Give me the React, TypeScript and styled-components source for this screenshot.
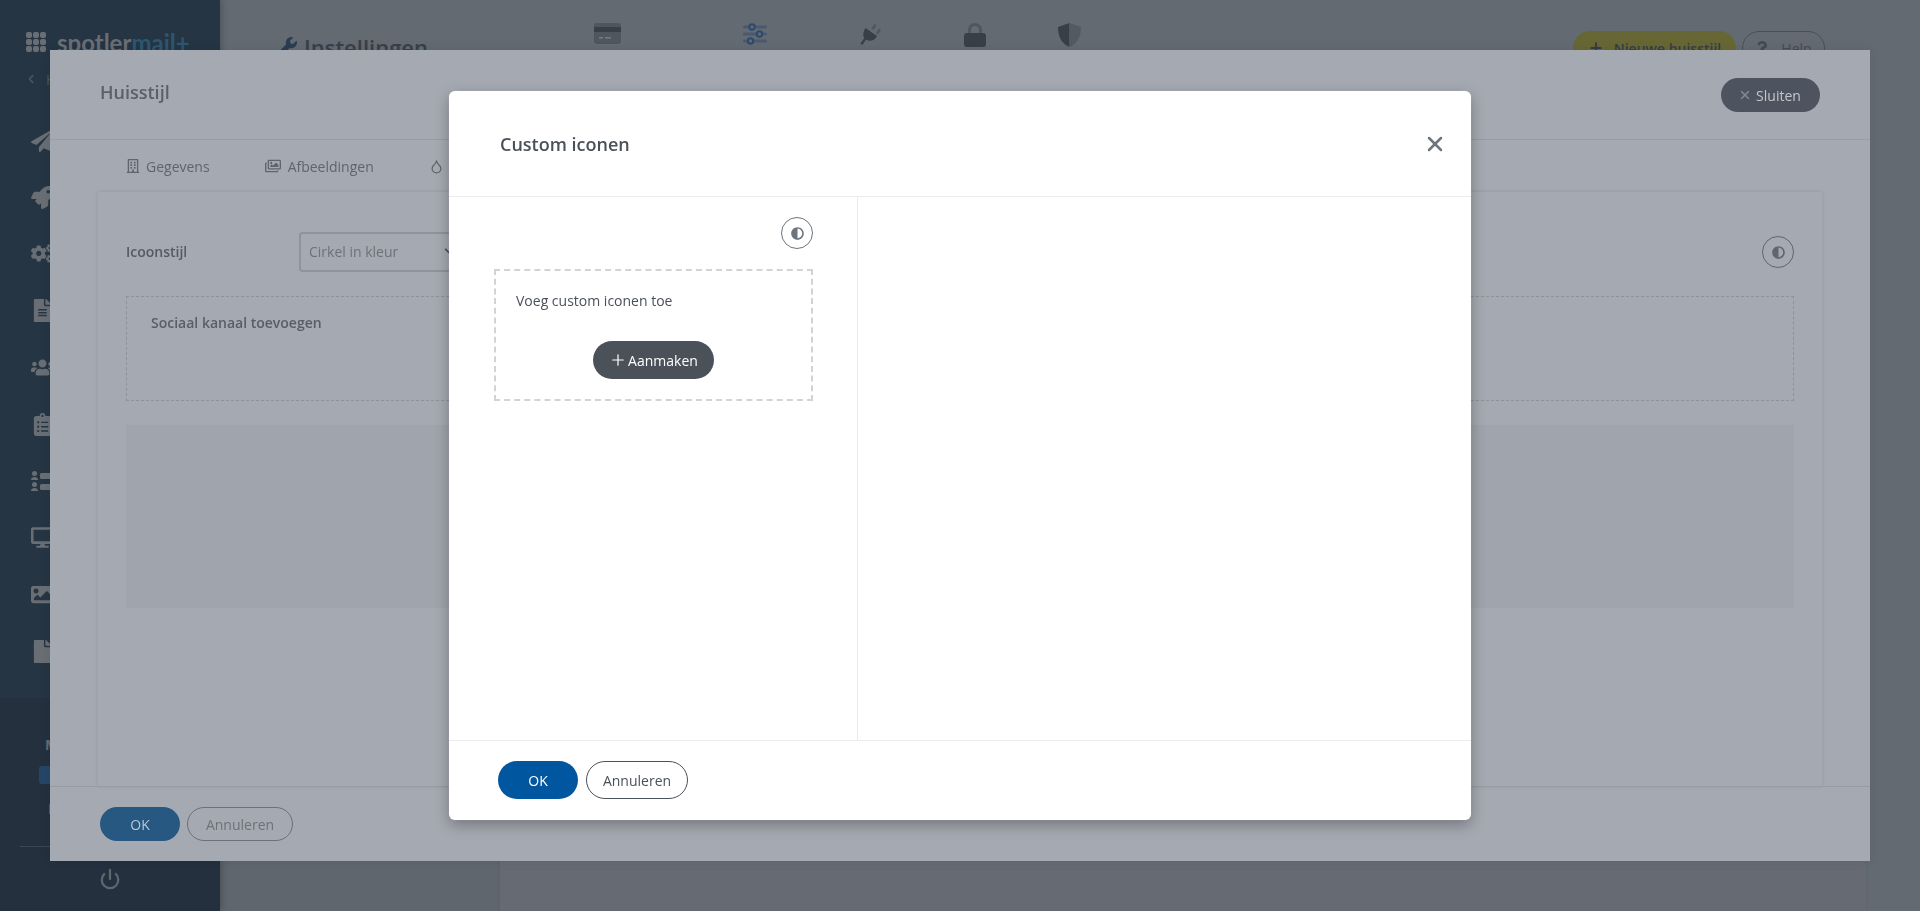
import React from 'react';
import styled, { createGlobalStyle } from 'styled-components';
import {
  FaPaperPlane, FaRocket, FaCogs, FaFileAlt, FaUsers, FaClipboardList, FaDesktop, FaImage, FaFile,
  FaWrench, FaRegBuilding, FaRegImages, FaAdjust, FaChevronLeft, FaChevronDown, FaQuestion,
} from 'react-icons/fa';
import { Plus, X, Power, Droplet } from 'lucide-react';

const Global = createGlobalStyle`
  html, body { margin: 0; padding: 0; height: 100%; overflow: hidden; }
  body { font-family: "Open Sans", "Noto Sans", sans-serif; font-size: 14px; }
  * { box-sizing: border-box; }
`;

const Page = styled.div`
  display: grid;
  grid-template-columns: 220px 1fr;
  height: 911px;
  background: #636a72;
`;

/* ---------- sidebar (behind the dialogs) ---------- */
const Sidebar = styled.aside`
  display: flex;
  flex-direction: column;
  background: #24303e;
  box-shadow: 2px 0 6px rgba(0, 0, 0, 0.2);
  position: relative;
  color: #6f747b;
`;
const SidebarTop = styled.div`
  height: 698px;
  background: #253543;
  padding: 32px 0 0 26px;
`;
const Logo = styled.div`
  display: flex;
  align-items: center;
  gap: 11px;
  height: 20px;
`;
const Waffle = styled.div`
  display: grid;
  grid-template-columns: repeat(3, 6px);
  grid-auto-rows: 6px;
  gap: 1px;
  span { background: #696e75; border-radius: 2px; }
`;
const LogoText = styled.div`
  margin-top: 2px;
  font-family: Lato, sans-serif;
  font-weight: 700;
  font-size: 24px;
  line-height: 28px;
  color: #696e75;
  span { color: #2c5671; }
`;
const BackLink = styled.div`
  display: flex;
  align-items: center;
  gap: 10px;
  margin-top: 17px;
  height: 20px;
  color: #4b5560;
  font-size: 14px;
`;
const Nav = styled.nav`
  margin-top: 23px;
  display: flex;
  flex-direction: column;
  margin-left: 5px;
`;
const NavItem = styled.div`
  height: 56.8px;
  display: flex;
  align-items: center;
  color: #696e75;
  font-size: 23px;
`;
const SidebarBottom = styled.div`
  flex: 1;
  display: flex;
  flex-direction: column;
  padding-top: 37px;
`;
const AccountLine = styled.div<{ $indent: number; $top: number }>`
  margin-left: ${(p) => p.$indent}px;
  margin-top: ${(p) => p.$top}px;
  font-weight: 700;
  font-size: 14px;
  line-height: 20px;
  color: #666b72;
`;
const AccountBadge = styled.div`
  margin: 11px 0 0 39px;
  width: 40px;
  height: 18px;
  background: #264668;
  border-radius: 3px;
`;
const SideDivider = styled.div`
  height: 1px;
  margin: 27px 20px 0;
  background: #3c4754;
`;
const PowerWrap = styled.div`
  display: flex;
  justify-content: center;
  margin-top: 21px;
  color: #5f656d;
`;

/* ---------- main page (behind the dialogs) ---------- */
const Main = styled.main`
  display: flex;
  flex-direction: column;
  min-width: 0;
`;
const TopBar = styled.header`
  display: flex;
  align-items: flex-start;
  height: 100px;
  padding: 23px 95px 0 57px;
`;
const TitleGroup = styled.div`
  width: 317px;
  margin-top: 10px;
  display: flex;
  align-items: center;
  gap: 7px;
  color: #2b3d50;
  font-size: 20px;
`;
const PageTitle = styled.h1`
  margin: 0;
  font-size: 22px;
  line-height: 28px;
  font-weight: 600;
  color: #383f49;
`;
const TopTab = styled.div<{ $gap: number }>`
  margin-left: ${(p) => p.$gap}px;
  line-height: 0;
`;
const TopActions = styled.div`
  margin-left: auto;
  margin-top: 8px;
  display: flex;
  gap: 6px;
`;
const TopButton = styled.div<{ $yellow?: boolean }>`
  height: 34px;
  border-radius: 17px;
  display: flex;
  justify-content: center;
  align-items: center;
  gap: ${(p) => (p.$yellow ? 10 : 12)}px;
  width: ${(p) => (p.$yellow ? 163 : 83)}px;
  background: ${(p) => (p.$yellow ? '#676735' : 'transparent')};
  border: ${(p) => (p.$yellow ? '0' : '1px solid #475059')};
  color: ${(p) => (p.$yellow ? '#363d42' : '#434c54')};
  font-size: 14px;
  font-weight: ${(p) => (p.$yellow ? 600 : 400)};
`;
const PageBody = styled.div`
  flex: 1;
  display: grid;
  grid-template-columns: 280px 1fr;
  margin-right: 54px;
`;
const PageLeft = styled.div`
  background: #60666e;
`;
const PageRight = styled.div`
  background: #666a72;
  box-shadow: 0 0 3px rgba(0, 0, 0, 0.08);
`;

/* ---------- full-screen style editor ---------- */
const StylePanel = styled.section`
  position: fixed;
  left: 50px;
  top: 50px;
  width: 1820px;
  height: 811px;
  display: flex;
  flex-direction: column;
  background: #a5a9b1;
  box-shadow: 0 0 10px rgba(0, 0, 0, 0.08);
  color: #5f656d;
`;
const PanelHeader = styled.div`
  height: 90px;
  flex-shrink: 0;
  display: flex;
  align-items: center;
  justify-content: space-between;
  padding: 0 50px 0 50px;
  border-bottom: 1px solid #989ca5;
`;
const PanelTitle = styled.h2`
  margin: -6px 0 0;
  font-size: 18px;
  line-height: 24px;
  font-weight: 600;
  color: #5a6068;
`;
const CloseButton = styled.div`
  height: 34px;
  width: 99px;
  padding-right: 2px;
  border-radius: 17px;
  background: #4d545f;
  color: #c3c6cb;
  font-size: 14px;
  font-weight: 500;
  display: flex;
  align-items: center;
  justify-content: center;
  gap: 4px;
  margin-top: 1px;
  svg { color: #858a93; }
`;
const Tabs = styled.nav`
  height: 52px;
  flex-shrink: 0;
  display: flex;
  align-items: center;
  gap: 55px;
  padding-left: 76px;
`;
const Tab = styled.div<{ $gap: number }>`
  display: flex;
  align-items: center;
  gap: ${(p) => p.$gap}px;
  font-size: 14px;
  color: #5f656d;
`;
const Card = styled.div`
  flex: 1;
  margin: 0 48px;
  padding: 40px 28px 0;
  box-shadow: 0 0 4px rgba(0, 0, 0, 0.12);
  min-height: 0;
`;
const StyleRow = styled.div`
  display: flex;
  align-items: center;
  height: 40px;
`;
const RowLabel = styled.div`
  width: 173px;
  margin-top: -2px;
  font-weight: 600;
  font-size: 14px;
  color: #555b63;
`;
const FakeSelect = styled.div`
  width: 167px;
  height: 40px;
  padding: 0 10px 2px 8px;
  border: 2px solid #8f939c;
  border-radius: 4px;
  display: flex;
  align-items: center;
  justify-content: space-between;
  font-size: 14px;
  color: #6d7279;
  svg { color: #4b5159; }
`;
const ToggleCircle = styled.div<{ $dim?: boolean }>`
  width: 32px;
  height: 32px;
  flex-shrink: 0;
  margin-left: auto;
  border-radius: 50%;
  border: 1px solid ${(p) => (p.$dim ? '#5f666f' : '#6c757d')};
  color: ${(p) => (p.$dim ? '#5f666f' : '#6c757d')};
  display: flex;
  align-items: center;
  justify-content: center;
`;
const AddChannel = styled.div`
  margin-top: 24px;
  height: 105px;
  padding: 15px 24px;
  border: 1px dashed #8d9199;
  font-size: 14px;
  line-height: 21px;
  font-weight: 600;
  color: #585e66;
`;
const PreviewBlock = styled.div`
  margin-top: 24px;
  height: 183px;
  background: #a0a4ac;
`;
const PanelFooter = styled.div`
  height: 75px;
  flex-shrink: 0;
  display: flex;
  gap: 7px;
  padding: 20px 0 0 50px;
  border-top: 1px solid #979ba4;
`;
const PanelOk = styled.div`
  width: 80px;
  height: 34px;
  border-radius: 17px;
  background: #265882;
  color: #b9c6d3;
  font-weight: 500;
  font-size: 14px;
  display: flex;
  align-items: center;
  justify-content: center;
`;
const PanelCancel = styled.div`
  width: 106px;
  height: 34px;
  border-radius: 17px;
  border: 1px solid #6b7079;
  color: #6d7279;
  font-size: 14px;
  display: flex;
  align-items: center;
  justify-content: center;
`;

/* ---------- dialog ---------- */
const Dialog = styled.section`
  position: fixed;
  left: 449px;
  top: 91px;
  width: 1022px;
  height: 729px;
  display: flex;
  flex-direction: column;
  background: #fff;
  border-radius: 6px;
  box-shadow: 0 5px 15px rgba(0, 0, 0, 0.3), 0 0 1px rgba(255, 255, 255, 0.6);
  color: #4b5159;
`;
const DialogHeader = styled.div`
  height: 106px;
  flex-shrink: 0;
  display: flex;
  align-items: center;
  justify-content: space-between;
  padding: 0 24px 0 51px;
  border-bottom: 1px solid #e9ebec;
`;
const DialogTitle = styled.h3`
  margin: 0;
  font-size: 18px;
  line-height: 24px;
  font-weight: 600;
  color: #4b5159;
`;
const CloseIcon = styled.div`
  color: #6c757d;
  line-height: 0;
`;
const DialogBody = styled.div`
  flex: 1;
  min-height: 0;
  display: grid;
  grid-template-columns: 409px 1fr;
`;
const LeftColumn = styled.div`
  border-right: 1px solid #e9ebec;
  padding: 20px 44px 0 45px;
`;
const ToggleRow = styled.div`
  display: flex;
  height: 32px;
`;
const DropZone = styled.div`
  margin-top: 20px;
  height: 132px;
  padding: 19px 20px 20px;
  border: 2px dashed #d2d3d5;
  display: flex;
  flex-direction: column;
  align-items: center;
`;
const DropText = styled.div`
  align-self: flex-start;
  font-size: 14px;
  line-height: 21px;
  color: #4b5159;
`;
const CreateButton = styled.button`
  margin-top: 30px;
  width: 121px;
  height: 38px;
  border: 0;
  border-radius: 19px;
  background: #4b5159;
  color: #fff;
  font: 500 14px "Open Sans", sans-serif;
  display: flex;
  align-items: center;
  justify-content: center;
  gap: 1px;
  padding: 0;
`;
const DialogFooter = styled.div`
  height: 80px;
  flex-shrink: 0;
  display: flex;
  gap: 8px;
  padding: 20px 0 0 49px;
  border-top: 1px solid #e9ebec;
`;
const OkButton = styled.button`
  width: 80px;
  height: 38px;
  border: 0;
  padding: 0;
  border-radius: 19px;
  background: #01579f;
  color: #fff;
  font: 500 14px "Open Sans", sans-serif;
`;
const CancelButton = styled.button`
  width: 102px;
  height: 38px;
  padding: 0;
  border: 1px solid #4b5159;
  border-radius: 19px;
  background: #fff;
  color: #4b5159;
  font: 400 14px "Open Sans", sans-serif;
`;

/* ---------- drawings ---------- */
const CardIcon = () => (
  <svg width="27" height="21" viewBox="0 0 27 21">
    <rect width="27" height="21" rx="3" fill="#4f565f" />
    <rect y="4" width="27" height="5" fill="#383f48" />
    <rect x="5" y="14" width="4" height="1.6" fill="#747a82" />
    <rect x="11" y="14" width="6" height="1.6" fill="#747a82" />
  </svg>
);
const SlidersIcon = () => (
  <svg width="24" height="22" viewBox="0 0 24 22" fill="none">
    <g fill="#4a5a6c">
      <rect y="2.5" width="24" height="3" rx="1.5" />
      <rect y="9.5" width="24" height="3" rx="1.5" />
      <rect y="16.5" width="24" height="3" rx="1.5" />
    </g>
    <g fill="#636a72" stroke="#2a4a6e" strokeWidth="2">
      <circle cx="9" cy="4" r="2.7" />
      <circle cx="16.5" cy="11" r="2.7" />
      <circle cx="7.5" cy="18" r="2.7" />
    </g>
  </svg>
);
const PlugIcon = () => (
  <svg width="21" height="22" viewBox="0 0 21 22">
    <path d="M11.5 5.5 14.5 1l2 1.4-3 4.5zM16 10l3-4.5 2 1.4-3 4.5z" fill="#4f565f" />
    <path d="M5.500 5 17 13c-1.400 2.800-3.200 4.600-6.600 4.800-1.600.1-3-.4-4.300-1.300L2.300 22 .5 20.500l3.900-5.500C3.400 13.600 3.100 12 3.400 10.400 3.700 8.300 4.500 6.400 5.500 5z" fill="#383f48" />
  </svg>
);
const LockIcon = () => (
  <svg width="22" height="24" viewBox="0 0 22 24" fill="none">
    <path d="M5.500 11V7a5.500 5.500 0 0 1 11 0v4" stroke="#4f565f" strokeWidth="3" />
    <rect y="10" width="22" height="14" rx="3" fill="#383f48" />
  </svg>
);
const ShieldIcon = () => (
  <svg width="23" height="24" viewBox="0 0 23 24">
    <path d="M11.500 0v24C4 21 0 14 0 4z" fill="#383f48" />
    <path d="M11.500 0 23 4c0 10-4 17-11.500 20z" fill="#535a63" />
  </svg>
);
const PeopleListIcon = () => (
  <svg width="24" height="21" viewBox="0 0 24 21" fill="#696e75">
    <circle cx="3.500" cy="2.500" r="2.500" />
    <path d="M0 9c0-2 1.500-3 3.500-3S7 7 7 9z" />
    <circle cx="3.500" cy="13.500" r="2.500" />
    <path d="M0 20c0-2 1.500-3 3.500-3S7 18 7 20z" />
    <rect x="9" y="2" width="15" height="6" rx="1.500" />
    <rect x="9" y="13" width="15" height="6" rx="1.500" />
  </svg>
);

export default function App() {
  return (
    <>
      <Global />
      <Page>
        <Sidebar>
          <SidebarTop>
            <Logo>
              <Waffle>{Array.from({ length: 9 }, (_, i) => <span key={i} />)}</Waffle>
              <LogoText>spotler<span>mail+</span></LogoText>
            </Logo>
            <BackLink><FaChevronLeft size={10} />Home</BackLink>
            <Nav>
              <NavItem><FaPaperPlane /></NavItem>
              <NavItem><FaRocket /></NavItem>
              <NavItem><FaCogs /></NavItem>
              <NavItem><FaFileAlt /></NavItem>
              <NavItem><FaUsers /></NavItem>
              <NavItem><FaClipboardList /></NavItem>
              <NavItem><PeopleListIcon /></NavItem>
              <NavItem><FaDesktop /></NavItem>
              <NavItem><FaImage /></NavItem>
              <NavItem><FaFile /></NavItem>
            </Nav>
          </SidebarTop>
          <SidebarBottom>
            <AccountLine $indent={45} $top={0}>Mijn</AccountLine>
            <AccountBadge />
            <AccountLine $indent={48} $top={15}>Info</AccountLine>
            <SideDivider />
            <PowerWrap><Power size={22} strokeWidth={2.5} /></PowerWrap>
          </SidebarBottom>
        </Sidebar>
        <Main>
          <TopBar>
            <TitleGroup>
              <FaWrench />
              <PageTitle>Instellingen</PageTitle>
            </TitleGroup>
            <TopTab $gap={0}><CardIcon /></TopTab>
            <TopTab $gap={122}><SlidersIcon /></TopTab>
            <TopTab $gap={93}><PlugIcon /></TopTab>
            <TopTab $gap={83}><LockIcon /></TopTab>
            <TopTab $gap={72}><ShieldIcon /></TopTab>
            <TopActions>
              <TopButton $yellow><Plus size={16} strokeWidth={3} />Nieuwe huisstijl</TopButton>
              <TopButton><FaQuestion size={14} />Help</TopButton>
            </TopActions>
          </TopBar>
          <PageBody>
            <PageLeft />
            <PageRight />
          </PageBody>
        </Main>
      </Page>

      <StylePanel>
        <PanelHeader>
          <PanelTitle>Huisstijl</PanelTitle>
          <CloseButton><X size={14} strokeWidth={2.5} />Sluiten</CloseButton>
        </PanelHeader>
        <Tabs>
          <Tab $gap={6}><FaRegBuilding width={12} height={16} />Gegevens</Tab>
          <Tab $gap={7}><FaRegImages size={16} />Afbeeldingen</Tab>
          <Tab $gap={0}><Droplet size={15} /></Tab>
        </Tabs>
        <Card>
          <StyleRow>
            <RowLabel>Icoonstijl</RowLabel>
            <FakeSelect>Cirkel in kleur<FaChevronDown size={10} /></FakeSelect>
            <ToggleCircle $dim><FaAdjust size={13} /></ToggleCircle>
          </StyleRow>
          <AddChannel>Sociaal kanaal toevoegen</AddChannel>
          <PreviewBlock />
        </Card>
        <PanelFooter>
          <PanelOk>OK</PanelOk>
          <PanelCancel>Annuleren</PanelCancel>
        </PanelFooter>
      </StylePanel>

      <Dialog>
        <DialogHeader>
          <DialogTitle>Custom iconen</DialogTitle>
          <CloseIcon><X size={24} strokeWidth={2.5} /></CloseIcon>
        </DialogHeader>
        <DialogBody>
          <LeftColumn>
            <ToggleRow>
              <ToggleCircle><FaAdjust size={13} /></ToggleCircle>
            </ToggleRow>
            <DropZone>
              <DropText>Voeg custom iconen toe</DropText>
              <CreateButton><Plus size={18} strokeWidth={1.6} />Aanmaken</CreateButton>
            </DropZone>
          </LeftColumn>
          <div />
        </DialogBody>
        <DialogFooter>
          <OkButton>OK</OkButton>
          <CancelButton>Annuleren</CancelButton>
        </DialogFooter>
      </Dialog>
    </>
  );
}
